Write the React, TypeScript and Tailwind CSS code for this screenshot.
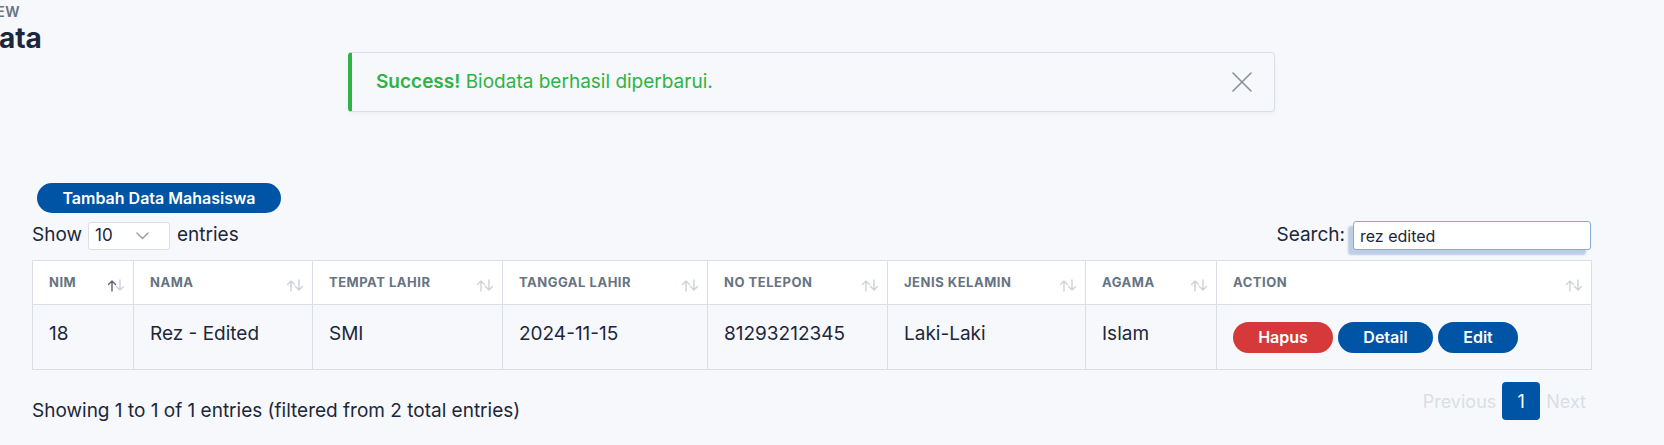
import React from "react";

const cols = [
  { label: "NIM", w: 101, active: true },
  { label: "NAMA", w: 179 },
  { label: "TEMPAT LAHIR", w: 190 },
  { label: "TANGGAL LAHIR", w: 205 },
  { label: "NO TELEPON", w: 180 },
  { label: "JENIS KELAMIN", w: 198 },
  { label: "AGAMA", w: 131 },
  { label: "ACTION", w: 375 },
];

function SortIcon({ active }: { active?: boolean }) {
  const up = active ? "#5b6472" : "#cdd2d9";
  return (
    <svg width="18" height="13" viewBox="0 0 18 13" fill="none">
      <path d="M5 12V2M1.5 5.5L5 2l3.5 3.5" stroke={up} strokeWidth="1.4" strokeLinecap="round" strokeLinejoin="round" />
      <path d="M13 1v10M9.5 7.5L13 11l3.5-3.5" stroke="#cdd2d9" strokeWidth="1.4" strokeLinecap="round" strokeLinejoin="round" />
    </svg>
  );
}

export default function App() {
  const row = ["18", "Rez - Edited", "SMI", "2024-11-15", "81293212345", "Laki-Laki", "Islam"];
  return (
    <div className="min-h-[445px] w-full overflow-hidden bg-[#f6f8fb] text-[#1d273b]" style={{ fontFamily: "Inter, 'Liberation Sans', sans-serif" }}>
      {/* Page header (scrolled partially out of view) */}
      <div className="h-[52px] pt-[3px] -ml-[62px]">
        <div className="ml-[3px] text-[14px] leading-[18px] font-semibold uppercase tracking-[0.04em] text-[#667382]">Overview</div>
        <div className="text-[28px] leading-[34px] font-bold text-[#1d273b]">Biodata</div>
      </div>

      <div className="ml-[32px] w-[1559px]">
        {/* Alert */}
        <div className="mx-auto flex h-[60px] w-[927px] items-center justify-between rounded-[4px] border border-[#dadfe5] border-l-4 border-l-[#2fb344] bg-[#f6f8fb] pl-[24px] pr-[22px] shadow-[0_2px_4px_rgba(29,39,59,0.04)]">
          <div className="text-[19px] text-[#2fb344]">
            <span className="font-semibold">Success!</span> Biodata berhasil diperbarui.
          </div>
          <svg width="20" height="20" viewBox="0 0 20 20" fill="none">
            <path d="M1 1l18 18M19 1L1 19" stroke="#8a9099" strokeWidth="1.6" strokeLinecap="round" />
          </svg>
        </div>

        {/* Add button */}
        <div className="mt-[71px] pl-[5px]">
          <button className="flex h-[30px] w-[244px] items-center justify-center rounded-full bg-[#0054a6] text-[16px] font-semibold text-white">
            Tambah Data Mahasiswa
          </button>
        </div>

        {/* Controls */}
        <div className="mt-[8px] flex h-[29px] items-center justify-between">
          <div className="flex items-center text-[19px]">
            <span>Show</span>
            <div className="ml-[6px] flex h-[28px] w-[82px] items-center justify-between rounded-[3px] border border-[#dadfe5] bg-white pl-[6px] pr-[20px] text-[17px]">
              <span>10</span>
              <svg width="13" height="8" viewBox="0 0 13 8" fill="none">
                <path d="M1 1l5.5 5.5L12 1" stroke="#9aa0ac" strokeWidth="1.5" strokeLinecap="round" strokeLinejoin="round" />
              </svg>
            </div>
            <span className="ml-[7px]">entries</span>
          </div>
          <div className="flex items-center text-[19px]">
            <span>Search:</span>
            <div className="ml-[8px] flex h-[29px] w-[238px] items-center rounded-[3px] border border-[#86a9d8] bg-white pl-[6px] text-[16px] shadow-[-5px_5px_2px_#bccde4]">
              rez edited
            </div>
          </div>
        </div>

        {/* Table */}
        <table className="mt-[10px] w-[1559px] table-fixed border-collapse border border-[#dadfe5]">
          <colgroup>
            {cols.map((c) => (
              <col key={c.label} style={{ width: c.w }} />
            ))}
          </colgroup>
          <thead>
            <tr className="h-[44px] bg-white">
              {cols.map((c) => (
                <th key={c.label} className="border border-[#dadfe5] pl-[16px] pr-[8px] text-left align-middle">
                  <div className="flex items-center justify-between">
                    <span className="text-[13px] font-bold uppercase tracking-[0.04em] text-[#667382]">{c.label}</span>
                    <span className="mt-[6px]"><SortIcon active={c.active} /></span>
                  </div>
                </th>
              ))}
            </tr>
          </thead>
          <tbody>
            <tr className="h-[65px] bg-[#f7f8fb]">
              {row.map((v, i) => (
                <td key={i} className="border border-[#dadfe5] pl-[16px] pb-[6px] text-[19px] align-middle">
                  {v}
                </td>
              ))}
              <td className="border border-[#dadfe5] pl-[16px] align-middle">
                <div className="flex gap-[5px]">
                  <button className="h-[31px] w-[100px] rounded-full bg-[#d63939] text-[16px] font-semibold text-white">Hapus</button>
                  <button className="h-[31px] w-[95px] rounded-full bg-[#0054a6] text-[16px] font-semibold text-white">Detail</button>
                  <button className="h-[31px] w-[80px] rounded-full bg-[#0054a6] text-[16px] font-semibold text-white">Edit</button>
                </div>
              </td>
            </tr>
          </tbody>
        </table>

        {/* Footer */}
        <div className="flex items-start justify-between">
          <div className="pt-[28px] text-[19px] leading-[26px]">Showing 1 to 1 of 1 entries (filtered from 2 total entries)</div>
          <div className="flex items-center gap-[6px] pr-[5px] pt-[12px] text-[18px] text-[#d9dee5]">
            <span>Previous</span>
            <span className="flex h-[38px] w-[38px] items-center justify-center rounded-[4px] bg-[#0054a6] text-white">1</span>
            <span>Next</span>
          </div>
        </div>
      </div>
    </div>
  );
}
